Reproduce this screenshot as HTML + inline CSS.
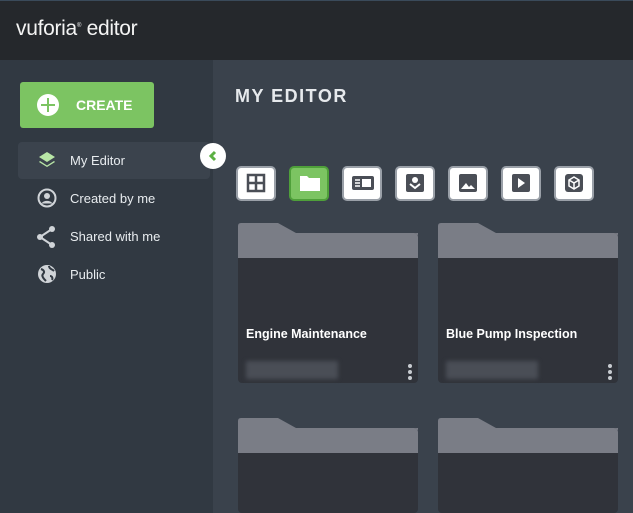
<html style="overflow:hidden;width:633px;height:513px"><head><style>
body{margin:0;width:633px;height:513px;overflow:hidden;font-family:"Liberation Sans",sans-serif;background:#3a424c;position:relative}
.hdr{position:absolute;left:0;top:0;width:633px;height:60px;background:#25282c;border-top:1px solid #3a4a5a;box-sizing:border-box}
.logo{position:absolute;left:16px;top:16px;color:#f4f4f4;font-size:21px;letter-spacing:-0.3px}
.side{position:absolute;left:0;top:60px;width:213px;height:453px;background:#313942}
.create{position:absolute;left:20px;top:82px;width:134px;height:46px;background:#7cc462;border-radius:3px;color:#fff;font-weight:bold;font-size:14px}
.create .pl{position:absolute;left:17px;top:12px;width:22px;height:22px;border-radius:50%;background:#fff}
.create .pl:before,.create .pl:after{content:"";position:absolute;background:#7cc462;left:10px;top:4px;width:2px;height:14px}
.create .pl:after{left:4px;top:10px;width:14px;height:2px}
.create span{position:absolute;left:56px;top:15px}
.nav{position:absolute;left:18px;width:192px;height:37px;color:#e8ecef;font-size:13px}
.nav span{position:absolute;left:52px;top:11px}
.nav svg{position:absolute;left:19px;top:8px}
.sel{background:#3b434d;border-radius:4px}
.coll{position:absolute;left:200px;top:143px;width:26px;height:26px;border-radius:50%;background:#fff}
.title{position:absolute;left:235px;top:86px;color:#e6e9ec;font-weight:bold;font-size:18px;letter-spacing:1.5px}
.btn{position:absolute;top:166px;width:36px;height:31px;background:#fff;border:2px solid #9aa0a8;border-radius:5px}
.btn svg{position:absolute;left:8px;top:5px}
.card{position:absolute;width:180px;height:160px}
.tab{position:absolute;left:0;top:0}
.body{position:absolute;left:0;top:10px;width:180px;height:150px;background:#30333a;border-radius:0 4px 4px 4px;overflow:hidden}
.body .top{height:25px;background:#7a7d86}
.name{position:absolute;left:8px;top:104px;color:#fff;font-weight:bold;font-size:12.5px}
.blur{position:absolute;left:8px;top:138px;width:92px;height:18px;background:#4a4e56;border-radius:2px;filter:blur(2px)}
.dots{position:absolute;right:6px;top:141px;width:4px}
.dots i{display:block;width:4px;height:4px;border-radius:50%;background:#c8ccd1;margin-bottom:2px}
</style></head><body>
<div class="hdr"><div class="logo">vuforia<sup style="font-size:6px">®</sup> editor</div></div>
<div class="side"></div>
<div class="create"><div class="pl"></div><span>CREATE</span></div>
<div class="nav sel" style="top:142px"><svg width="20" height="20" viewBox="0 0 20 20"><path d="M10 2l8 5-8 5-8-5z" fill="#b8e6a6"/><path d="M3 11l7 4.5 7-4.5 1 1-8 5-8-5z" fill="#b8e6a6"/></svg><span>My Editor</span></div>
<div class="nav" style="top:180px"><svg width="20" height="20" viewBox="0 0 20 20"><circle cx="10" cy="10" r="8.5" fill="none" stroke="#d0d4d8" stroke-width="2"/><circle cx="10" cy="8" r="3" fill="#d0d4d8"/><path d="M4.5 15.5c2-3.5 9-3.5 11 0" fill="#d0d4d8"/></svg><span>Created by me</span></div>
<div class="nav" style="top:218px"><svg width="20" height="22" viewBox="0 0 20 22"><circle cx="15" cy="3" r="3" fill="#d0d4d8"/><circle cx="3" cy="11" r="3" fill="#d0d4d8"/><circle cx="15" cy="19" r="3" fill="#d0d4d8"/><path d="M15 3L3 11l12 8" stroke="#d0d4d8" stroke-width="2" fill="none"/></svg><span>Shared with me</span></div>
<div class="nav" style="top:256px"><svg width="20" height="20" viewBox="0 0 20 20"><circle cx="10" cy="10" r="9" fill="#d0d4d8"/><path d="M4 5c3 1 4 3 2 5s1 5 3 7M12 2c0 3 3 3 5 5M13 12c2 0 3 2 2 4" stroke="#313942" stroke-width="2" fill="none"/></svg><span>Public</span></div>
<div class="coll"><svg width="26" height="26" viewBox="0 0 26 26"><path d="M15 9l-4 4 4 4" stroke="#5cb043" stroke-width="3" fill="none"/></svg></div>
<div class="title">MY EDITOR</div>
<div class="btn" style="left:236px"><svg width="20" height="20" viewBox="0 0 20 20"><path d="M2 2h16v16H2zM10 2v16M2 10h16" stroke="#4a4e56" stroke-width="2.5" fill="none"/></svg></div>
<div class="btn" style="left:289px;background:#7cc462;border-color:#4fa03a"><svg width="22" height="20" viewBox="0 0 22 20"><path d="M1 3h7l2 2h11v13H1z" fill="#fff"/></svg></div>
<div class="btn" style="left:342px"><svg width="22" height="20" viewBox="0 0 22 20"><rect x="0" y="3" width="22" height="14" rx="2" fill="#4a4e56"/><path d="M3 7h5M3 10h5M3 13h5" stroke="#fff" stroke-width="1.5"/><rect x="10" y="6" width="9" height="8" fill="#fff"/></svg></div>
<div class="btn" style="left:395px"><svg width="20" height="20" viewBox="0 0 20 20"><rect x="1" y="1" width="18" height="18" rx="2" fill="#4a4e56"/><circle cx="10" cy="7" r="3" fill="#fff"/><path d="M5 11l5 4 5-4" stroke="#fff" stroke-width="2" fill="none"/></svg></div>
<div class="btn" style="left:448px"><svg width="20" height="20" viewBox="0 0 20 20"><rect x="1" y="1" width="18" height="18" rx="2" fill="#4a4e56"/><path d="M3 16l5-6 3 4 2-2 4 4z" fill="#fff"/></svg></div>
<div class="btn" style="left:501px"><svg width="20" height="20" viewBox="0 0 20 20"><rect x="1" y="1" width="18" height="18" rx="2" fill="#4a4e56"/><path d="M7 5l7 5-7 5z" fill="#fff"/></svg></div>
<div class="btn" style="left:554px"><svg width="20" height="20" viewBox="0 0 20 20"><rect x="1" y="1" width="18" height="18" rx="3" fill="#4a4e56"/><path d="M10 4l5 3v6l-5 3-5-3V7zM5 7l5 3 5-3M10 10v6" stroke="#fff" stroke-width="1.5" fill="none"/></svg></div>

<div class="card" style="left:238px;top:223px"><svg class="tab" width="180" height="12"><path d="M0 3Q0 0 3 0H40L58 10H180V12H0z" fill="#7a7d86"/></svg><div class="body"><div class="top"></div></div><div class="name">Engine Maintenance</div><div class="blur"></div><div class="dots"><i></i><i></i><i></i></div></div>
<div class="card" style="left:438px;top:223px"><svg class="tab" width="180" height="12"><path d="M0 3Q0 0 3 0H40L58 10H180V12H0z" fill="#7a7d86"/></svg><div class="body"><div class="top"></div></div><div class="name">Blue Pump Inspection</div><div class="blur"></div><div class="dots"><i></i><i></i><i></i></div></div>
<div class="card" style="left:238px;top:418px;height:95px"><svg class="tab" width="180" height="12"><path d="M0 3Q0 0 3 0H40L58 10H180V12H0z" fill="#7a7d86"/></svg><div class="body" style="height:85px"><div class="top"></div></div></div>
<div class="card" style="left:438px;top:418px;height:95px"><svg class="tab" width="180" height="12"><path d="M0 3Q0 0 3 0H40L58 10H180V12H0z" fill="#7a7d86"/></svg><div class="body" style="height:85px"><div class="top"></div></div></div>
</body></html>
